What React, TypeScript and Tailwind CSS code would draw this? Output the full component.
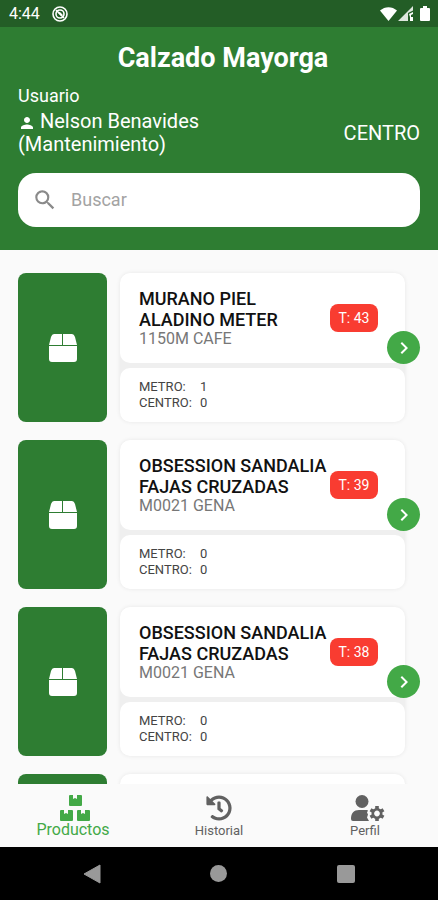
import { FaHistory } from 'react-icons/fa';
import { MdChevronRight, MdPerson, MdSearch } from 'react-icons/md';

type Product = {
  id: number;
  name: string;
  code: string;
  size: number;
  stock: { store: string; amount: number }[];
};

const products: Product[] = [
  {
    id: 1,
    name: 'MURANO PIEL ALADINO METER',
    code: '1150M CAFE',
    size: 43,
    stock: [
      { store: 'METRO', amount: 1 },
      { store: 'CENTRO', amount: 0 },
    ],
  },
  {
    id: 2,
    name: 'OBSESSION SANDALIA FAJAS CRUZADAS',
    code: 'M0021 GENA',
    size: 39,
    stock: [
      { store: 'METRO', amount: 0 },
      { store: 'CENTRO', amount: 0 },
    ],
  },
  {
    id: 3,
    name: 'OBSESSION SANDALIA FAJAS CRUZADAS',
    code: 'M0021 GENA',
    size: 38,
    stock: [
      { store: 'METRO', amount: 0 },
      { store: 'CENTRO', amount: 0 },
    ],
  },
];

const StatusBar = () => (
  <div className="flex h-[27px] shrink-0 items-center justify-between bg-[#235d26] pr-2 pl-[9px] text-white">
    <div className="flex items-center gap-3">
      <span className="text-base leading-5">4:44</span>
      <svg viewBox="0 0 16 16" className="size-4" fill="none" stroke="currentColor">
        <circle cx="8" cy="8" r="7" strokeWidth="1.6" />
        <circle cx="8" cy="8" r="4" strokeWidth="1.6" />
        <path d="M4 4l8 8" strokeWidth="1.6" />
        <path d="M7 6.500l3 3" strokeWidth="2" />
      </svg>
    </div>
    <div className="flex items-center">
      <svg viewBox="0 0 17 14" className="h-[14px] w-[17px]" fill="currentColor">
        <path d="M8.500 14L0 3.500C5-1 12-1 17 3.500z" />
      </svg>
      <svg viewBox="0 0 16 15" className="ml-px h-[15px] w-4" fill="currentColor">
        <path d="M0 15L15 0v4.500L10 7v8z" opacity=".85" />
        <path d="M11 8l4-2v2l-2 1v2h2v4h-3v-4z" />
      </svg>
      <svg viewBox="0 0 10 15" className="ml-[6px] h-[15px] w-[10px]" fill="currentColor">
        <path d="M3 0h4v2h2a1 1 0 0 1 1 1v11a1 1 0 0 1-1 1H1a1 1 0 0 1-1-1V3a1 1 0 0 1 1-1h2z" />
      </svg>
    </div>
  </div>
);

const Header = () => (
  <header className="shrink-0 bg-[#2e7d32] px-[18px] pt-4 pb-[23px] text-white">
    <h1 className="pl-2 text-center text-[27px] leading-[30px] font-bold">Calzado Mayorga</h1>
    <div className="mt-[11px] text-lg leading-6">Usuario</div>
    <div className="mt-[2px] flex items-center justify-between">
      <div className="w-[200px] text-xl leading-[23px]">
        <MdPerson className="mr-1 inline size-[18px] align-[-4px]" />
        Nelson Benavides (Mantenimiento)
      </div>
      <div className="text-xl leading-[23px]">CENTRO</div>
    </div>
    <label className="mt-[17px] flex h-[54px] items-center gap-[13px] rounded-[18px] bg-white pr-4 pl-[14px]">
      <MdSearch className="size-[26px] shrink-0 text-[#8a8a8a]" />
      <input
        type="search"
        aria-label="Buscar"
        placeholder="Buscar"
        className="w-full min-w-0 bg-transparent text-lg text-gray-900 outline-none placeholder:text-[#a3a3a3]"
      />
    </label>
  </header>
);

const PackageIcon = () => (
  <svg viewBox="0 0 28 28" className="size-7" fill="#fff">
    <path d="M5 0h8v11H0L2 3Q3 0 5 0zM14 0h9q2 0 3 3l2 8H14zM0 12h28v13q0 3-3 3H3q-3 0-3-3z" />
  </svg>
);

const BoxesIcon = () => (
  <svg viewBox="-4 0 34 26" className="h-[26px] w-[34px]" fill="currentColor">
    <path d="M10 0h3v4l2-1 2 1V0h4q1 0 1 1v9q0 1-1 1H10q-1 0-1-1V1q0-1 1-1z" />
    <path d="M1 15h3v4l2-1 2 1v-4h4q1 0 1 1v9q0 1-1 1H1q-1 0-1-1v-9q0-1 1-1z" />
    <path d="M18 15h3v4l2-1 2 1v-4h4q1 0 1 1v9q0 1-1 1H18q-1 0-1-1v-9q0-1 1-1z" />
  </svg>
);

const UserGearIcon = () => (
  <svg viewBox="-6 0 40 27" className="h-[27px] w-10" fill="currentColor">
    <circle cx="11" cy="6.500" r="6.500" />
    <path d="M8 15h8l1 .5-1 2 1 2-1 3 2 3.500H2q-2 0-2-2c0-6 3-9 8-9z" />
    <g transform="translate(26 18.500)" fill="none" stroke="currentColor">
      <circle r="4.200" strokeWidth="2.600" />
      <path d="M0-7.500v3M0 7.500v-3" strokeWidth="3.600" />
      <path d="M0-7.500v3M0 7.500v-3" strokeWidth="3.600" transform="rotate(60)" />
      <path d="M0-7.500v3M0 7.500v-3" strokeWidth="3.600" transform="rotate(120)" />
    </g>
  </svg>
);

const ProductCard = ({ product }: { product: Product }) => (
  <article className="relative flex shrink-0 gap-[13px]">
    <div className="flex w-[89px] items-center justify-center rounded-lg bg-[#2e7d32]">
      <PackageIcon />
    </div>
    <div className="mr-[15px] flex flex-1 flex-col gap-[5px] rounded-[10px] bg-[#efefef] shadow-[0_0_4px_rgba(0,0,0,0.08)]">
      <div className="flex h-[90px] items-center justify-between rounded-[10px] bg-white pr-[27px] pl-[19px]">
        <div className="w-[190px]">
          <h2 className="text-lg leading-[21px] font-medium text-[#111]">{product.name}</h2>
          <p className="text-base leading-[18px] text-[#777]">{product.code}</p>
        </div>
        <span className="flex h-7 w-12 shrink-0 items-center justify-center rounded-lg bg-[#f93c31] text-sm text-white">
          T: {product.size}
        </span>
      </div>
      <div className="h-[54px] rounded-[10px] bg-white pt-[11px] pl-[19px]">
        {product.stock.map(({ store, amount }) => (
          <div key={store} className="flex text-[13px] leading-4 text-[#444]">
            <span className="w-[61px]">{store}:</span>
            <span>{amount}</span>
          </div>
        ))}
      </div>
    </div>
    <button
      type="button"
      aria-label="Ver producto"
      className="absolute top-[58px] right-0 flex size-[33px] items-center justify-center rounded-full bg-[#43a947] text-white"
    >
      <MdChevronRight className="size-6" />
    </button>
  </article>
);

const ProductPlaceholder = () => (
  <div className="flex h-[149px] shrink-0 gap-[13px]" aria-hidden="true">
    <div className="w-[89px] rounded-lg bg-[#2e7d32]" />
    <div className="mr-[15px] flex-1 rounded-[10px] bg-white shadow-[0_0_4px_rgba(0,0,0,0.08)]" />
  </div>
);

const BottomNav = () => (
  <nav className="grid h-[63px] shrink-0 grid-cols-3 items-start bg-[#fafafa] pt-[11px] text-[#616161]">
    <button type="button" className="flex flex-col items-center text-[#43a947]">
      <BoxesIcon />
      <span className="text-base leading-[18px]">Productos</span>
    </button>
    <button type="button" className="flex flex-col items-center">
      <FaHistory className="size-[26px]" />
      <span className="text-[13px] leading-5">Historial</span>
    </button>
    <button type="button" className="flex flex-col items-center">
      <UserGearIcon />
      <span className="text-[13px] leading-[18px]">Perfil</span>
    </button>
  </nav>
);

const SystemBar = () => (
  <div className="grid h-[53px] shrink-0 grid-cols-3 items-center bg-black px-7 text-[#999]">
    <button type="button" aria-label="Atrás" className="flex justify-center">
      <svg viewBox="0 0 18 20" className="h-5 w-[18px]" fill="currentColor">
        <path d="M17 1v18L1 10z" stroke="currentColor" strokeLinejoin="round" />
      </svg>
    </button>
    <button type="button" aria-label="Inicio" className="flex justify-center">
      <span className="size-[17px] rounded-full bg-[#999]" />
    </button>
    <button type="button" aria-label="Recientes" className="flex justify-center">
      <span className="size-[18px] rounded-xs bg-[#999]" />
    </button>
  </div>
);

const App = () => {
  return (
    <div className="flex h-screen flex-col overflow-hidden bg-[#fafafa] font-[Roboto,sans-serif]">
      <StatusBar />
      <Header />
      <main className="flex min-h-0 flex-1 flex-col gap-[18px] overflow-hidden px-[18px] pt-[23px]">
        {products.map((product) => (
          <ProductCard key={product.id} product={product} />
        ))}
        <ProductPlaceholder />
      </main>
      <BottomNav />
      <SystemBar />
    </div>
  );
};

export default App;
